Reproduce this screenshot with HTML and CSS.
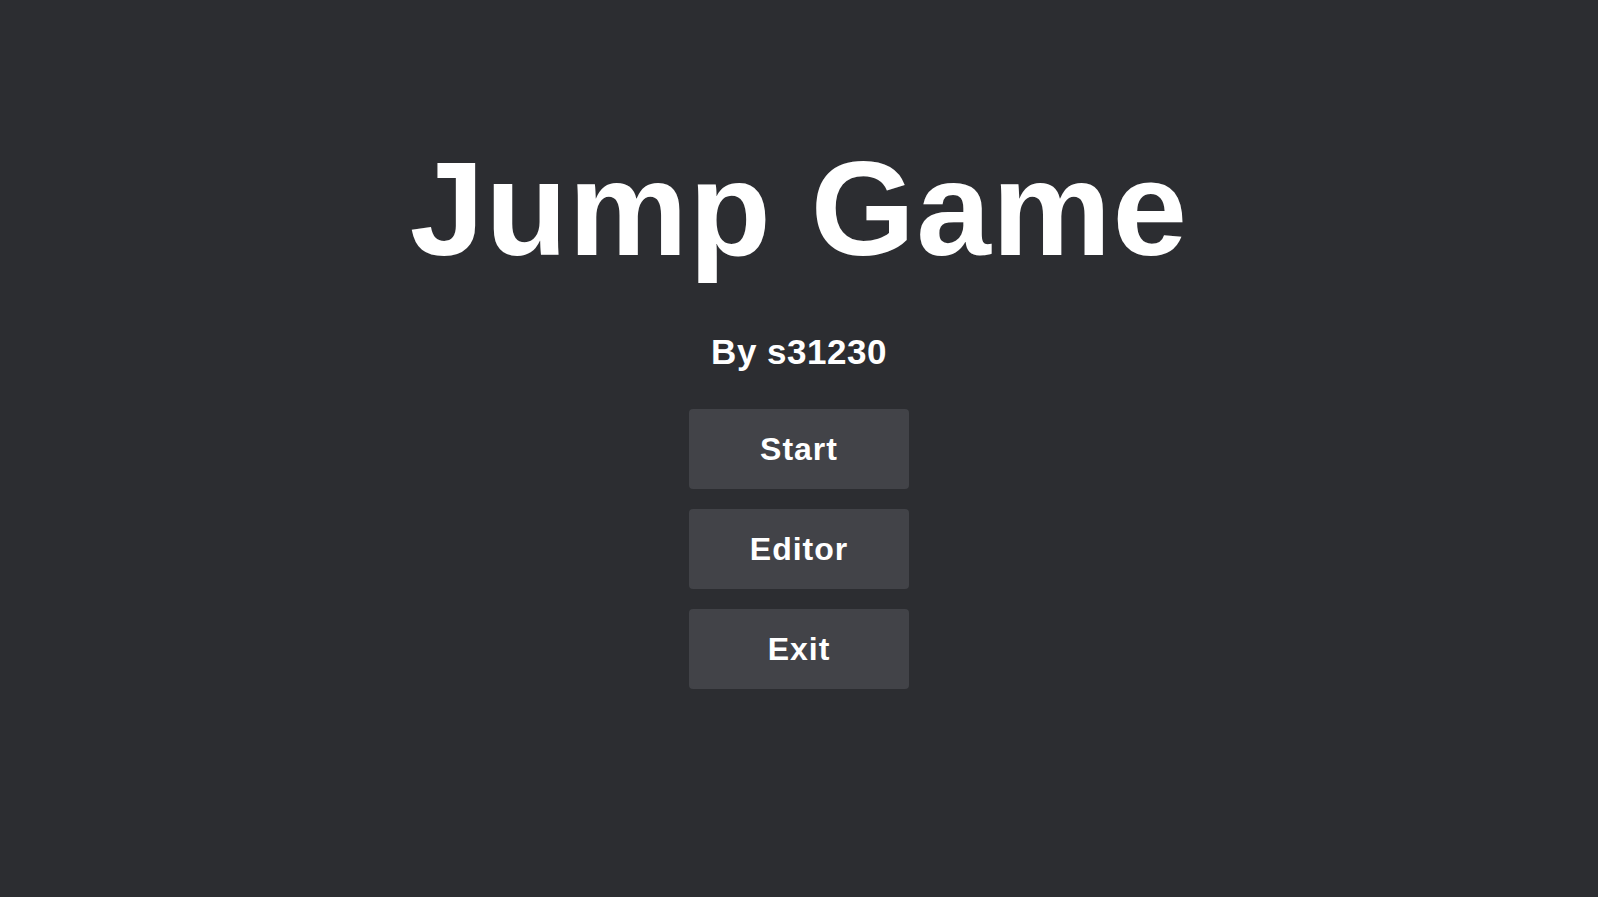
FILE: index.html
```html
<!DOCTYPE html>
<html>
<head>
<meta charset="utf-8">
<title>Jump Game</title>
<link rel="stylesheet" href="styles.css">
</head>
<body>
<main class="menu">
  <h1 class="title">Jump Game</h1>
  <p class="author">By s31230</p>
  <nav class="buttons">
    <button class="btn">Start</button>
    <button class="btn">Editor</button>
    <button class="btn">Exit</button>
  </nav>
</main>
</body>
</html>
```

FILE: styles.css
```css
html, body {
  margin: 0;
  padding: 0;
  height: 100%;
}
body {
  background: #2c2d31;
  color: #ffffff;
  font-family: "Liberation Sans", Arial, sans-serif;
}
.menu {
  display: flex;
  flex-direction: column;
  align-items: center;
  padding-top: 142px;
}
.title {
  margin: 0;
  font-size: 134px;
  line-height: 1;
  font-weight: 700;
  letter-spacing: 1.3px;
}
.author {
  margin: 58px 0 0;
  font-size: 35px;
  line-height: 1;
  font-weight: 700;
  letter-spacing: 0.5px;
}
.buttons {
  display: flex;
  flex-direction: column;
  gap: 20px;
  margin-top: 40px;
}
.btn {
  width: 220px;
  height: 80px;
  border: none;
  border-radius: 4px;
  background: #424348;
  color: #ffffff;
  font-family: "Liberation Sans", Arial, sans-serif;
  font-size: 32px;
  font-weight: 700;
  letter-spacing: 1px;
  display: flex;
  align-items: center;
  justify-content: center;
  padding: 0;
}
```
